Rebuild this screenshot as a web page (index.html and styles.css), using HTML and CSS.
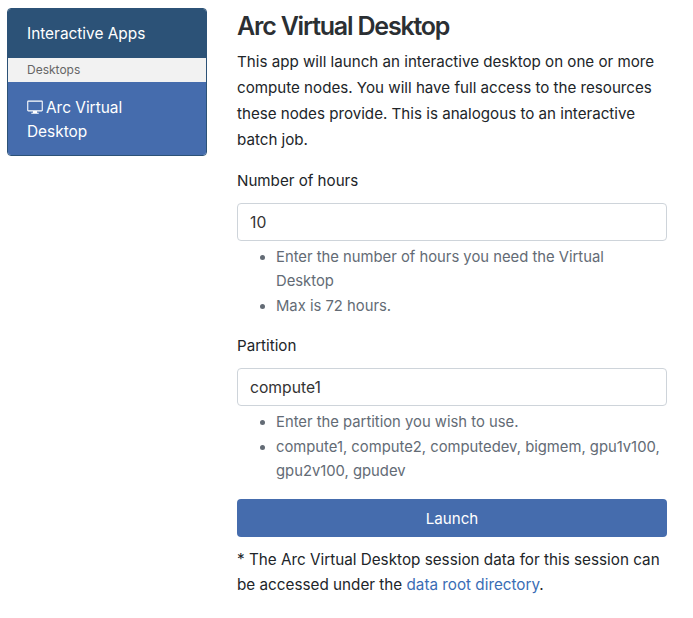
FILE: index.html
```html
<!DOCTYPE html>
<html lang="en">
<head>
    <meta charset="UTF-8">
    <meta name="viewport" content="width=device-width, initial-scale=1.0">
    <title>Arc Virtual Desktop</title>
    <link rel="stylesheet" href="styles.css">
</head>
<body>
    <div class="page">
        <!-- App list -->
        <nav class="sidebar">
            <div class="sidebar-head">Interactive Apps</div>
            <div class="sidebar-group">Desktops</div>
            <a class="sidebar-item" href="#">
                <svg class="icon-desktop" viewBox="0 0 16 16" width="16" height="16" aria-hidden="true">
                    <path fill="currentColor" d="M1.4 1.6h13.2c.7 0 1.2.5 1.2 1.2v8.4c0 .7-.5 1.2-1.2 1.2H9.900l.3 1.400h1.500v.9H4.300v-.9h1.500l.3-1.400H1.400c-.7 0-1.200-.5-1.200-1.200V2.800c0-.7.5-1.200 1.200-1.200zm0 1.100c-.1 0-.1 0-.1.100v8.400c0 .1 0 .1.100.1h13.200c.1 0 .1 0 .1-.1V2.800c0-.1 0-.1-.1-.1H1.400z"/>
                </svg>Arc Virtual Desktop
            </a>
        </nav>

        <main class="content">
            <h1>Arc Virtual Desktop</h1>
            <p class="intro">This app will launch an interactive desktop on one or more compute nodes. You will have full access to the resources these nodes provide. This is analogous to an interactive batch job.</p>

            <form>
                <div class="field">
                    <label for="hours">Number of hours</label>
                    <input type="text" id="hours" value="10">
                    <ul class="help">
                        <li>Enter the number of hours you need the Virtual Desktop</li>
                        <li>Max is 72 hours.</li>
                    </ul>
                </div>

                <div class="field">
                    <label for="partition">Partition</label>
                    <input type="text" id="partition" value="compute1">
                    <ul class="help">
                        <li>Enter the partition you wish to use.</li>
                        <li>compute1, compute2, computedev, bigmem, gpu1v100, gpu2v100, gpudev</li>
                    </ul>
                </div>

                <button type="submit">Launch</button>
            </form>

            <p class="note">* The Arc Virtual Desktop session data for this session can be accessed under the <a href="#">data root directory</a>.</p>
        </main>
    </div>
</body>
</html>
```

FILE: styles.css
```css
* {
    box-sizing: border-box;
}
body {
    margin: 0;
    background-color: #fff;
    color: #212529;
    font-family: Inter, "Liberation Sans", sans-serif;
    font-size: 15.15px;
    line-height: 24px;
}
.page {
    display: flex;
    align-items: flex-start;
    gap: 30px;
    padding: 8px 26px 0 7px;
}
.sidebar {
    flex: 0 0 200px;
    border: 1px solid #2c5277;
    border-radius: 4px;
    overflow: hidden;
}
.sidebar-head {
    height: 49px;
    padding: 13px 19px;
    background-color: #2c5277;
    color: #fff;
    font-size: 15.4px;
}
.sidebar-group {
    height: 24px;
    padding: 0 19px;
    background-color: #f2f2f2;
    color: #666;
    font-size: 12px;
}
.sidebar-item {
    display: block;
    padding: 14px 40px 11px 19px;
    background-color: #456cad;
    color: #fff;
    font-size: 15.4px;
    text-decoration: none;
}
.icon-desktop {
    margin-right: 3px;
    vertical-align: -2px;
}
.content {
    flex: 1;
    min-width: 0;
}
h1 {
    margin: 0 0 5px;
    color: #2b2f33;
    font-size: 25px;
    font-weight: 600;
    letter-spacing: -1.2px;
    line-height: 36px;
}
p {
    margin: 0;
}
.intro {
    margin-bottom: 16px;
    line-height: 26px;
}
.field {
    margin-bottom: 16px;
}
label {
    display: block;
    margin-bottom: 10px;
}
input {
    display: block;
    width: 100%;
    height: 38px;
    padding: 6px 12px;
    border: 1px solid #ced4da;
    border-radius: 4px;
    color: #333;
    font: inherit;
    font-size: 15.7px;
}
.help {
    margin: 4px 0 0;
    padding: 0 3px 0 39px;
    color: #636b75;
    font-size: 14.8px;
    line-height: 24.4px;
}
button {
    display: block;
    width: 100%;
    height: 38px;
    margin-top: 16px;
    padding: 2px 0 0;
    border: none;
    border-radius: 4px;
    background-color: #456cad;
    color: #fff;
    font: inherit;
    cursor: pointer;
}
.note {
    margin-top: 10px;
    font-size: 15.25px;
    line-height: 25px;
}
.note a {
    color: #3a6db5;
    text-decoration: none;
}
```
